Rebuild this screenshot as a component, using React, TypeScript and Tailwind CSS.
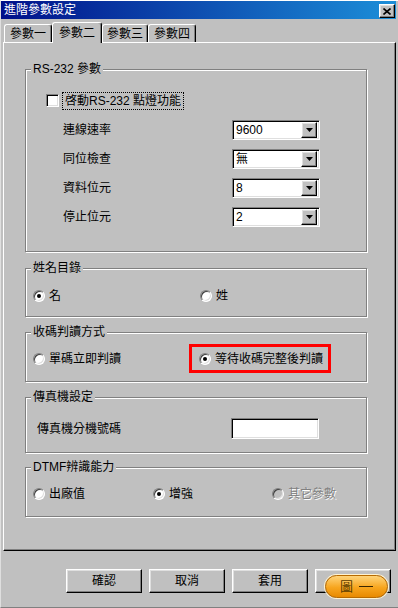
import React from "react";

const raised =
  "border border-t-white border-l-white border-r-black border-b-black shadow-[inset_-1px_-1px_0_#808080,inset_1px_1px_0_#dfdfdf]";
const sunken =
  "border border-t-[#808080] border-l-[#808080] border-r-white border-b-white shadow-[inset_1px_1px_0_#000,inset_-1px_-1px_0_#dfdfdf]";

function Group({
  label,
  h,
  mt,
  children,
}: {
  label: string;
  h: string;
  mt: string;
  children: React.ReactNode;
}) {
  return (
    <div
      className={`relative w-[342px] ${h} ${mt} border border-[#808080] shadow-[inset_1px_1px_0_#fff,1px_1px_0_#fff]`}
    >
      <div className="absolute left-[5px] -top-[8px] bg-[#c0c0c0] px-[2px] text-[12px] leading-[14px] text-black">
        {label}
      </div>
      {children}
    </div>
  );
}

function Radio({ checked, disabled }: { checked?: boolean; disabled?: boolean }) {
  return (
    <div
      className={`relative w-[12px] h-[12px] rounded-full border border-t-[#808080] border-l-[#808080] border-r-white border-b-white shadow-[inset_1px_1px_0_#404040,inset_-1px_-1px_0_#dfdfdf] ${
        disabled ? "bg-[#c0c0c0]" : "bg-white"
      } flex items-center justify-center shrink-0`}
    >
      {checked && <div className="w-[4px] h-[4px] rounded-full bg-black" />}
    </div>
  );
}

function RadioOpt({
  label,
  checked,
  disabled,
  w,
}: {
  label: string;
  checked?: boolean;
  disabled?: boolean;
  w?: string;
}) {
  return (
    <div className={`flex items-center ${w ?? ""}`}>
      <Radio checked={checked} disabled={disabled} />
      <span
        className={`ml-[4px] text-[12px] leading-[14px] ${
          disabled ? "text-[#808080] [text-shadow:1px_1px_0_#fff]" : "text-black"
        }`}
      >
        {label}
      </span>
    </div>
  );
}

function Select({ value }: { value: string }) {
  return (
    <div className={`w-[88px] h-[20px] bg-white flex items-center ${sunken} p-[2px]`}>
      <div className="flex-1 text-[12px] leading-[14px] pl-[1px] text-black">{value}</div>
      <div className={`w-[16px] h-[16px] bg-[#c0c0c0] ${raised} flex items-center justify-center`}>
        <svg width="7" height="4" viewBox="0 0 7 4">
          <path d="M0 0H7L3.5 4Z" fill="#000" />
        </svg>
      </div>
    </div>
  );
}

function Tab({ label, selected, w }: { label: string; selected?: boolean; w: string }) {
  return (
    <div
      className={`${w} ${
        selected ? "h-[21px] -mb-[1px] z-10 bg-[#c0c0c0]" : "h-[18px]"
      } flex items-center justify-center rounded-t-[3px] border-t border-l border-r border-t-white border-l-white border-r-black shadow-[inset_-1px_0_0_#808080] text-[12px] leading-[14px] text-black`}
    >
      {label}
    </div>
  );
}

function Btn({ label }: { label: string }) {
  return (
    <div
      className={`w-[76px] h-[24px] ${raised} bg-[#c0c0c0] flex items-center justify-center text-[12px] leading-[14px] text-black`}
    >
      {label}
    </div>
  );
}

export default function App() {
  return (
    <div className="w-[398px] h-[608px] bg-[#c0c0c0] overflow-hidden [font-family:'Liberation_Sans','Noto_Sans_CJK_TC',sans-serif]">
      <div className="w-[398px] h-[608px] border-t border-l border-t-white border-l-[#dfdfdf] border-b border-b-[#808080] flex flex-col">
        {/* title bar */}
        <div className="h-[18px] mr-[2px] flex items-center justify-between pl-[3px] pr-[1px] bg-[linear-gradient(90deg,#00108a,#1c8ed8)]">
          <span className="text-white text-[12px] leading-[14px]">進階參數設定</span>
          <div className={`w-[16px] h-[14px] mt-[2px] bg-[#c0c0c0] ${raised} flex items-center justify-center`}>
            <svg width="8" height="7" viewBox="0 0 8 7">
              <path d="M0.5 0.5L7.5 6.5M7.5 0.5L0.5 6.5" stroke="#000" strokeWidth="1.6" />
            </svg>
          </div>
        </div>

        {/* tabs */}
        <div className="h-[23px] flex items-end pl-[3px]">
          <Tab label="參數一" w="w-[48px]" />
          <Tab label="參數二" w="w-[50px]" selected />
          <Tab label="參數三" w="w-[46px]" />
          <Tab label="參數四" w="w-[48px]" />
        </div>

        {/* panel */}
        <div className="ml-[2px] w-[393px] h-[509px] border-t border-l border-t-white border-l-white border-r border-b border-r-black border-b-black shadow-[inset_-1px_-1px_0_#808080] pt-[26px] pl-[21px] flex flex-col">
          <Group label="RS-232 參數" h="h-[183px]" mt="mt-0">
            <div className="pt-[21px] pl-[20px] flex flex-col gap-[10px]">
              <div className="h-[19px] flex items-center">
                <div className={`w-[13px] h-[13px] bg-white ${sunken}`} />
                <div className="ml-[3px] h-[18px] border border-dotted border-black px-[2px] flex items-center text-[12px] leading-[14px] text-black">
                  啓動RS-232 點燈功能
                </div>
              </div>
              {[
                ["連線速率", "9600"],
                ["同位檢查", "無"],
                ["資料位元", "8"],
                ["停止位元", "2"],
              ].map(([l, v]) => (
                <div key={l} className="h-[19px] flex items-center pl-[17px]">
                  <div className="w-[169px] text-[12px] leading-[14px] text-black">{l}</div>
                  <Select value={v} />
                </div>
              ))}
            </div>
          </Group>

          <Group label="姓名目錄" h="h-[49px]" mt="mt-[16px]">
            <div className="pt-[20px] pl-[7px] flex items-center h-[33px]">
              <RadioOpt label="名" checked w="w-[167px]" />
              <RadioOpt label="姓" />
            </div>
          </Group>

          <Group label="收碼判讀方式" h="h-[50px]" mt="mt-[15px]">
            <div className="pt-[11px] pl-[7px] flex items-center">
              <RadioOpt label="單碼立即判讀" w="w-[156px]" />
              <div className="w-[142px] h-[29px] border-[3px] border-[#ff0000] flex items-center pl-[7px]">
                <RadioOpt label="等待收碼完整後判讀" checked />
              </div>
            </div>
          </Group>

          <Group label="傳真機設定" h="h-[56px]" mt="mt-[15px]">
            <div className="pt-[20px] pl-[11px] flex items-center">
              <div className="w-[194px] text-[12px] leading-[14px] text-black">傳真機分機號碼</div>
              <div className={`w-[88px] h-[21px] bg-white ${sunken}`} />
            </div>
          </Group>

          <Group label="DTMF辨識能力" h="h-[50px]" mt="mt-[14px]">
            <div className="pt-[19px] pl-[7px] flex items-center">
              <RadioOpt label="出廠值" w="w-[120px]" />
              <RadioOpt label="增強" checked w="w-[119px]" />
              <RadioOpt label="其它參數" disabled />
            </div>
          </Group>
        </div>

        {/* buttons */}
        <div className="mt-[18px] pl-[65px] flex gap-[7px]">
          <Btn label="確認" />
          <Btn label="取消" />
          <Btn label="套用" />
          <div className="relative">
            <Btn label="" />
            <div className="absolute left-[10px] top-[6px] w-[63px] h-[23px] rounded-full border border-[#b86a00] bg-[linear-gradient(180deg,#ffd47a_0%,#f7a51e_55%,#e88a00_100%)] shadow-[0_0_0_1px_#fff3d0] flex items-center justify-center gap-[6px]">
              <span className="text-[13px] leading-[14px] text-[#5a3c00]">圖</span>
              <div className="w-[14px] h-[1px] bg-[#3a2600]" />
            </div>
          </div>
        </div>
      </div>
    </div>
  );
}
